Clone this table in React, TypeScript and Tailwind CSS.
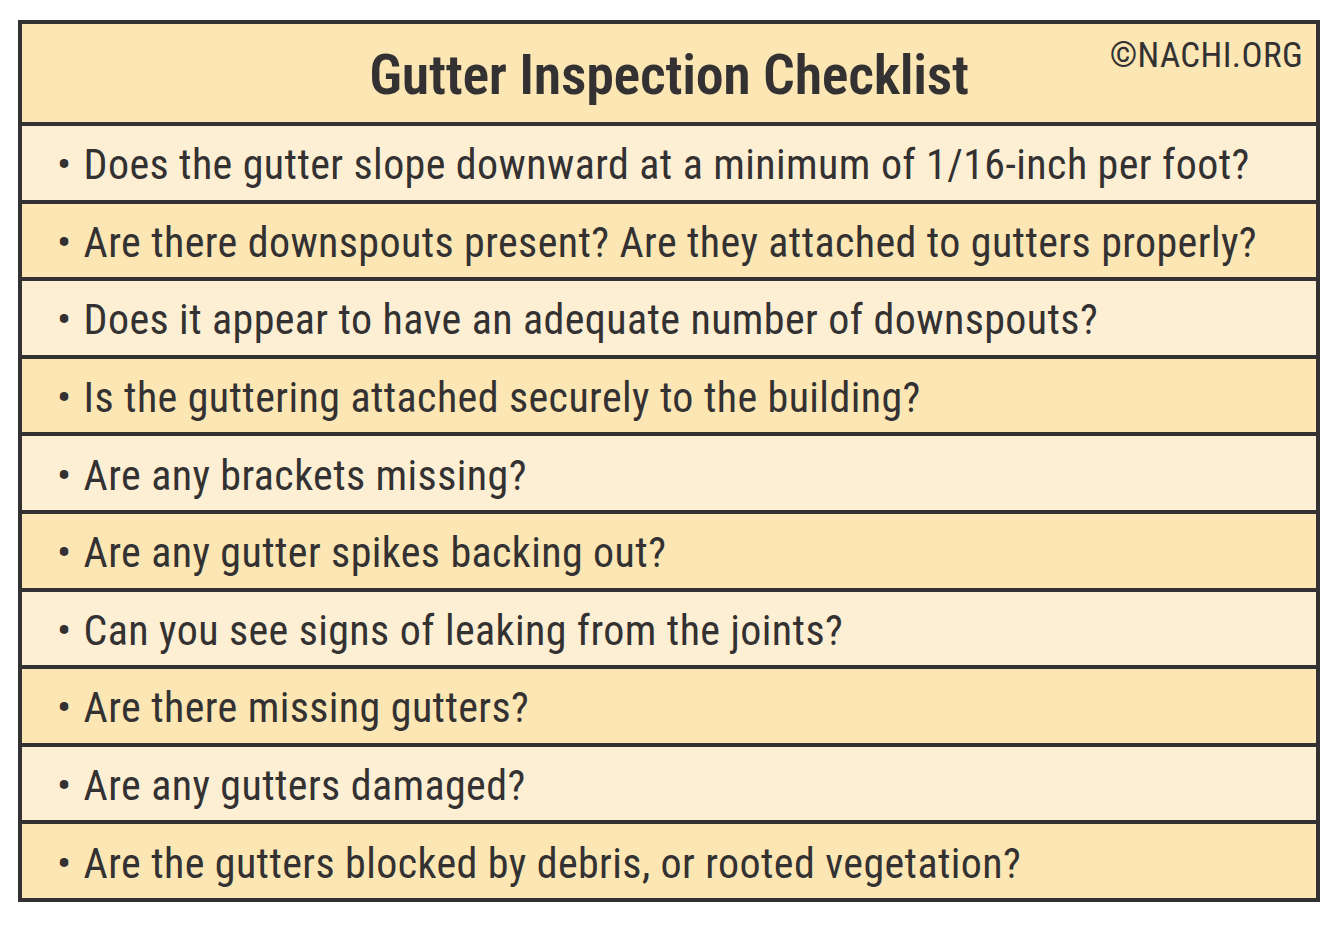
const items = [
  'Does the gutter slope downward at a minimum of 1/16-inch per foot?',
  'Are there downspouts present? Are they attached to gutters properly?',
  'Does it appear to have an adequate number of downspouts?',
  'Is the guttering attached securely to the building?',
  'Are any brackets missing?',
  'Are any gutter spikes backing out?',
  'Can you see signs of leaking from the joints?',
  'Are there missing gutters?',
  'Are any gutters damaged?',
  'Are the gutters blocked by debris, or rooted vegetation?',
]

const font = {
  fontFamily: '"Roboto Condensed", "Liberation Sans Narrow", "DejaVu Sans Condensed", Roboto, sans-serif',
}

export default function App() {
  return (
    <div className="min-h-[927px] w-[1337px] bg-white pt-5 pl-[18px]" style={font}>
      <div className="flex h-[882px] w-[1302px] flex-col border-4 border-[#333131] text-[#333131]">
        <div className="relative flex h-[102px] shrink-0 items-center justify-center border-b-4 border-[#333131] bg-[#fbe6b4] pt-[4px]">
          <h1 className="text-[56px] font-semibold leading-none tracking-[-0.3px]">
            Gutter Inspection Checklist
          </h1>
          <span className="absolute top-[14px] right-[13px] text-[35px] leading-none tracking-[0.4px]">
            ©NACHI.ORG
          </span>
        </div>
        {items.map((item, i) => (
          <div
            key={i}
            className={
              'flex flex-1 items-center pl-[35px] pt-[5px] ' +
              (i % 2 === 0 ? 'bg-[#fdefd4]' : 'bg-[#fbe6b4]') +
              (i > 0 ? ' border-t-4 border-[#333131]' : '')
            }
          >
            <span className="text-[42px] leading-none tracking-[0.4px]">
              <span className="mr-[12px]">•</span>
              {item}
            </span>
          </div>
        ))}
      </div>
    </div>
  )
}
